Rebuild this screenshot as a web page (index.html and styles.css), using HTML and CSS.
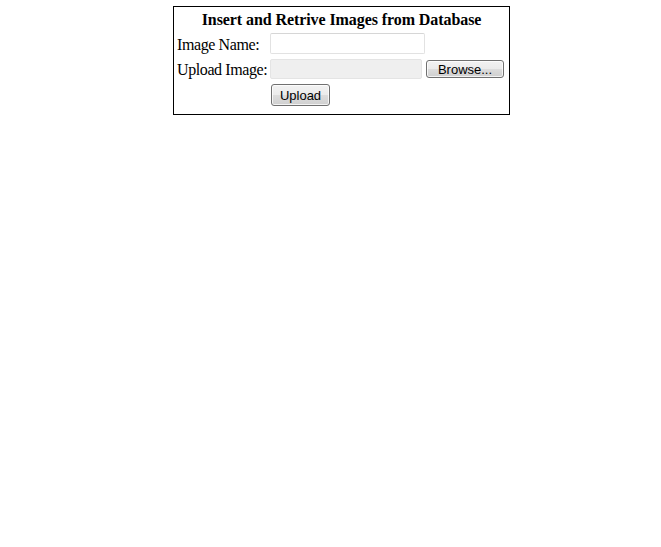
FILE: index.html
```html
<!DOCTYPE html>
<html>
<head>
<meta charset="utf-8">
<title>Insert and Retrive Images from Database</title>
<link rel="stylesheet" href="styles.css">
</head>
<body>
<form class="box">
  <div class="title">Insert and Retrive Images from Database</div>
  <div class="grid">
    <label class="lbl">Image Name:</label>
    <div class="cell"><input class="txt" type="text"></div>
    <label class="lbl">Upload Image:</label>
    <div class="cell file">
      <input class="filebox" type="text" readonly tabindex="-1">
      <button type="button" class="btn browse">Browse...</button>
    </div>
    <div></div>
    <div class="cell"><button type="button" class="btn upload">Upload</button></div>
  </div>
</form>
</body>
</html>
```

FILE: styles.css
```css
html, body {
  margin: 0;
  padding: 0;
  background: #fff;
}

.box {
  box-sizing: border-box;
  width: 337px;
  margin: 6px 0 0 173px;
  border: 1px solid #000;
  padding: 4px 3px 8px;
  font-family: "Liberation Serif", "Times New Roman", serif;
  font-size: 16px;
  color: #000;
}

.title {
  text-align: center;
  font-weight: bold;
  line-height: 18px;
  margin: 0 0 4px;
  letter-spacing: -0.08px;
}

.grid {
  display: grid;
  grid-template-columns: 93px auto;
  row-gap: 5px;
  align-items: center;
}

.lbl {
  line-height: 18px;
  padding-top: 2px;
  white-space: nowrap;
  letter-spacing: -0.4px;
}

.cell {
  display: flex;
  align-items: center;
}

.file {
  gap: 4px;
}

.txt {
  box-sizing: border-box;
  width: 155px;
  height: 21px;
  margin: 0;
  padding: 0 2px;
  border: 1px solid #e2e2e2;
  border-top-color: #d6d6d6;
  border-radius: 2px;
  background: #fff;
  font: 13px "Liberation Sans", Arial, sans-serif;
  outline: none;
}

.filebox {
  box-sizing: border-box;
  width: 152px;
  height: 20px;
  margin: 0;
  padding: 0;
  border: 1px solid #e4e4e4;
  border-radius: 2px;
  background: #efefef;
  outline: none;
}

.btn {
  box-sizing: border-box;
  margin: 0;
  padding: 0;
  border: 1px solid #707070;
  border-radius: 3px;
  background: linear-gradient(#f2f2f2 0%, #ebebeb 50%, #dddddd 50%, #cfcfcf 100%);
  box-shadow: inset 0 0 0 1px rgba(255, 255, 255, 0.75);
  font: 13px "Liberation Sans", Arial, sans-serif;
  color: #000;
  line-height: 1;
}

.browse {
  width: 78px;
  height: 18px;
}

.upload {
  width: 59px;
  height: 22px;
  margin-left: 1px;
}
```
